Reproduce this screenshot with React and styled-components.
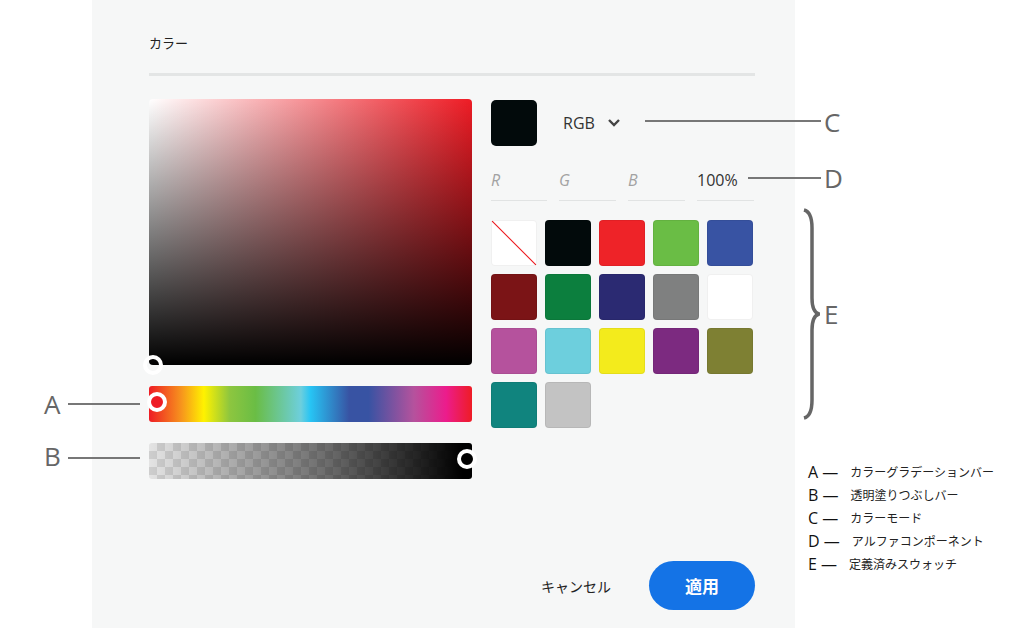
import React from "react";
import styled, { createGlobalStyle } from "styled-components";

const Global = createGlobalStyle`
  html, body { margin: 0; background: #fff; }
  body { font-family: "Open Sans", "Noto Sans CJK JP", sans-serif; }
`;

const Page = styled.div`
  position: relative;
  width: 1031px;
  height: 628px;
  overflow: hidden;
  background: #fff;
`;

const Panel = styled.div`
  position: absolute;
  left: 92px;
  top: 0;
  width: 703px;
  height: 628px;
  background: #f6f7f7;
  padding: 0 40px 0 57px;
  box-sizing: border-box;
  display: flex;
  flex-direction: column;
`;

const Title = styled.div`
  font-size: 13px;
  color: #222;
  padding-top: 33px;
  height: 40px;
  border-bottom: 3px solid #e3e5e5;
  width: 606px;
  box-sizing: content-box;
`;

const Body = styled.div`
  display: flex;
  gap: 19px;
  margin-top: 23px;
`;

const Left = styled.div`
  width: 323px;
  display: flex;
  flex-direction: column;
  gap: 21px;
`;

const Field = styled.div`
  position: relative;
  height: 266px;
  border-radius: 4px;
  background: linear-gradient(to top, #000, rgba(0,0,0,0)),
    linear-gradient(to right, #fff, #ee1c25);
`;

const Bar = styled.div`
  position: relative;
  height: 36px;
  border-radius: 3px;
  background: ${p => p.$bg};
`;

const Handle = styled.div`
  position: absolute;
  top: ${p => p.$top};
  left: ${p => p.$left};
  width: 12px;
  height: 12px;
  border: 4px solid #fff;
  border-radius: 50%;
  background: ${p => p.$fill};
`;

const Right = styled.div`
  width: 264px;
  display: flex;
  flex-direction: column;
`;

const ModeRow = styled.div`
  display: flex;
  align-items: center;
  gap: 26px;
  height: 46px;
  margin-top: 1px;
`;

const Current = styled.div`
  width: 46px;
  height: 46px;
  border-radius: 5px;
  background: #020a0b;
`;

const Mode = styled.div`
  display: flex;
  align-items: center;
  gap: 12px;
  font-size: 16px;
  color: #333;
`;

const Inputs = styled.div`
  display: grid;
  grid-template-columns: 56px 57px 57px 57px;
  column-gap: 12px;
  margin-top: 14px;
`;

const Input = styled.div`
  height: 40px;
  line-height: 40px;
  border-bottom: 1px solid #e1e3e3;
  font-size: 16px;
  color: ${p => (p.$val ? "#333" : "#a2a2a2")};
  font-style: ${p => (p.$val ? "normal" : "italic")};
`;

const Swatches = styled.div`
  display: grid;
  grid-template-columns: repeat(5, 46px);
  gap: 8px;
  margin-top: 19px;
`;

const Swatch = styled.div`
  width: 46px;
  height: 46px;
  border-radius: 4px;
  background: ${p => p.$c};
  box-shadow: inset 0 0 0 1px rgba(0,0,0,0.06);
`;

const Buttons = styled.div`
  margin-top: auto;
  margin-bottom: 18px;
  display: flex;
  justify-content: flex-end;
  align-items: center;
  gap: 38px;
  width: 606px;
`;

const Cancel = styled.div`
  font-size: 14px;
  color: #222;
`;

const Apply = styled.button`
  width: 106px;
  height: 49px;
  border: none;
  border-radius: 25px;
  background: #1473e6;
  color: #fff;
  font-size: 17px;
  font-weight: 700;
  font-family: inherit;
`;

const Letter = styled.div`
  position: absolute;
  left: ${p => p.$x}px;
  top: ${p => p.$y}px;
  font-size: 26px;
  color: #666;
  line-height: 1;
`;

const Line = styled.div`
  position: absolute;
  left: ${p => p.$x}px;
  top: ${p => p.$y}px;
  width: ${p => p.$w}px;
  height: 2px;
  background: #777;
`;

const Legend = styled.div`
  position: absolute;
  left: 808px;
  top: 462px;
  display: flex;
  flex-direction: column;
  gap: 4px;
`;

const LegendRow = styled.div`
  display: flex;
  align-items: center;
  gap: 10px;
  height: 19px;
  font-size: 16px;
  color: #111;
  span {
    font-size: 12px;
    color: #222;
    padding-left: 2px;
  }
`;

const colors = [
  "diag", "#020a0b", "#ee2328", "#6abd45", "#3853a3",
  "#7b1416", "#0c7f3e", "#2b2a72", "#7f8080", "#ffffff",
  "#b5529d", "#6dcfdd", "#f3eb1c", "#7c2a80", "#7e8033",
  "#10847e", "#c3c3c3",
];

const hue = "linear-gradient(to right,#ee1c25 0%,#f7941d 10%,#fff200 17%,#8dc63f 25%,#6abd45 33%,#6dcfdd 47%,#27c4f4 50%,#3853a3 62%,#3853a3 68%,#b5529d 82%,#ec1c8c 92%,#ee1c25 100%)";
const alpha = "linear-gradient(to right, rgba(0,0,0,0.05), rgba(0,0,0,0.55) 55%, #000 97%), repeating-conic-gradient(#d9d9d9 0 25%, #f0f0f0 0 50%) 0 0/16px 16px";

export default function App() {
  return (
    <Page>
      <Global />
      <Panel>
        <Title>カラー</Title>
        <Body>
          <Left>
            <Field>
              <Handle $top="256px" $left="-6px" $fill="transparent" />
            </Field>
            <Bar $bg={hue}>
              <Handle $top="6px" $left="-2px" $fill="#ee1c25" />
            </Bar>
            <Bar $bg={alpha}>
              <Handle $top="6px" $left="308px" $fill="#000" />
            </Bar>
          </Left>
          <Right>
            <ModeRow>
              <Current />
              <Mode>
                RGB
                <svg width="14" height="10" viewBox="0 0 14 10">
                  <path d="M2 2l5 5 5-5" fill="none" stroke="#444" strokeWidth="2.4" />
                </svg>
              </Mode>
            </ModeRow>
            <Inputs>
              <Input>R</Input>
              <Input>G</Input>
              <Input>B</Input>
              <Input $val>100%</Input>
            </Inputs>
            <Swatches>
              {colors.map((c, i) =>
                c === "diag" ? (
                  <Swatch key={i} $c="linear-gradient(to top right,#fff calc(50% - 1px),#ee2328 50%,#fff calc(50% + 1px))" />
                ) : (
                  <Swatch key={i} $c={c} />
                )
              )}
            </Swatches>
          </Right>
        </Body>
        <Buttons>
          <Cancel>キャンセル</Cancel>
          <Apply>適用</Apply>
        </Buttons>
      </Panel>

      <Letter $x={44} $y={391}>A</Letter>
      <Line $x={68} $y={403} $w={72} />
      <Letter $x={44} $y={443}>B</Letter>
      <Line $x={68} $y={457} $w={72} />
      <Line $x={645} $y={120} $w={176} />
      <Letter $x={824} $y={109}>C</Letter>
      <Line $x={748} $y={177} $w={73} />
      <Letter $x={824} $y={165}>D</Letter>
      <svg style={{ position: "absolute", left: 800, top: 208 }} width="20" height="212" viewBox="0 0 20 212">
        <path d="M4 2 Q12 4 12 20 L12 90 Q12 104 19 106 Q12 108 12 122 L12 192 Q12 208 4 210" fill="none" stroke="#666" strokeWidth="3.5" />
      </svg>
      <Letter $x={824} $y={301}>E</Letter>

      <Legend>
        <LegendRow>A —<span>カラーグラデーションバー</span></LegendRow>
        <LegendRow>B —<span>透明塗りつぶしバー</span></LegendRow>
        <LegendRow>C —<span>カラーモード</span></LegendRow>
        <LegendRow>D —<span>アルファコンポーネント</span></LegendRow>
        <LegendRow>E —<span>定義済みスウォッチ</span></LegendRow>
      </Legend>
    </Page>
  );
}
